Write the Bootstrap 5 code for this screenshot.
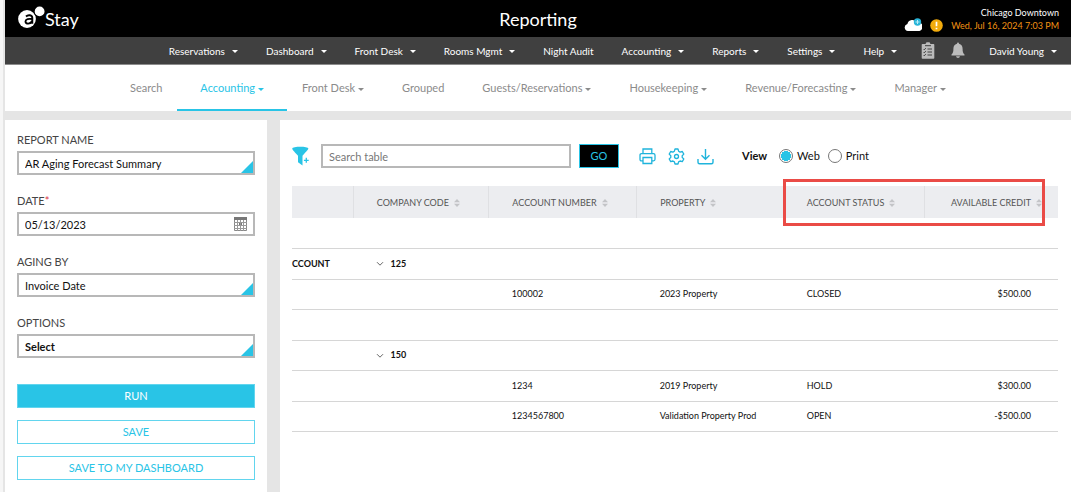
<!DOCTYPE html>
<html lang="en">
<head>
<meta charset="utf-8">
<meta name="viewport" content="width=device-width, initial-scale=1">
<title>Reporting - AR Aging Forecast Summary</title>
<link href="https://cdn.jsdelivr.net/npm/bootstrap@5.3.0/dist/css/bootstrap.min.css" rel="stylesheet">
<style>
  :root { --accent: #29c4e6; --rule: #e5e5e5; }
  body { font-family: Lato, sans-serif; font-size: 11px; line-height: 14px; color: #111; background: #f6f6f6; }
  a { text-decoration: none; }
  .app { margin-left: 3px; border-left: 2px solid var(--rule); background: #fff; }
  .topbar { background: #000; height: 37px; color: #fff; display: grid; grid-template-columns: 1fr auto 1fr; padding: 0 12px; }
  .brand-name { font-size: 18px; line-height: 22px; }
  .page-title { font-size: 18px; line-height: 22px; margin: 0; font-weight: 400; }
  .status { font-size: 9px; line-height: 13px; }
  .stamp { color: #f39314; }
  .mainnav { background: #404040; height: 28px; border-bottom: 1px solid #8c8c8c; gap: 20px; padding-right: 10px; font-size: 10px; }
  .mainnav a { color: #fff; }
  .mainnav > a { padding: 0 4px; }
  .arrow::after { content: ""; display: inline-block; border: 3px solid transparent; border-top-color: currentColor; border-bottom: 0; vertical-align: middle; margin-left: 7px; }
  .tabs .arrow::after { margin-left: 3px; }
  .tabs { height: 46px; font-size: 11px; }
  .tabs a { color: #8b8b8b; padding: 2px 23px 0; margin: 0 -4px; border-bottom: 2px solid transparent; display: flex; align-items: center; }
  .tabs a.active { color: var(--accent); border-color: var(--accent); }
  .workspace { background: var(--rule); padding-top: 9px; gap: 13px; }
  .sidebar { width: 262px; padding: 13px 12px 12px; background: #fff; }
  .sidebar label { color: #444; display: block; margin-bottom: 4px; }
  .field { margin-bottom: 19px; position: relative; }
  .box { display: block; width: 100%; height: 24px; border: 2px solid #b8b8b8; border-radius: 0; padding: 1px 6px 0; font-size: 11px; line-height: 19px; color: #111; background: #fff; appearance: none; }
  select.box { background: #fff url("data:image/svg+xml,%3Csvg xmlns='http://www.w3.org/2000/svg' width='12' height='12'%3E%3Cpath d='M12 0v12H0z' fill='%2329c4e6'/%3E%3C/svg%3E") right bottom no-repeat; }
  .cal { position: absolute; right: 8px; bottom: 5px; }
  .actions { gap: 12px; padding-top: 7px; }
  .btn-line { height: 24px; border: 1px solid #62d5ee; border-radius: 0; font-size: 11px; line-height: 14px; padding: 0; color: var(--accent); background: #fff; }
  .btn-line.fill { background: var(--accent); color: #fff; }
  .report { padding: 24px 13px 12px 12px; background: #fff; min-width: 0; }
  .search { width: 250px; }
  .search::placeholder { color: #777; opacity: 1; }
  .go { width: 40px; height: 24px; border: 1px solid var(--accent); border-radius: 0; background: #000; color: var(--accent); font-size: 11px; line-height: 14px; padding: 0; }
  .tool { border: 0; background: none; padding: 0; display: flex; color: #1fb4dc; }
  .pick { width: 14px; height: 14px; margin: 0; appearance: none; border: 1px solid #777; border-radius: 50%; }
  .pick:checked { background: radial-gradient(circle, var(--accent) 5px, #fff 5px); }
  .grid-wrap { position: relative; margin-top: 18px; }
  .grid { width: 100%; table-layout: fixed; font-size: 9px; }
  .grid th, .grid td { padding: 0 0 0 23px; white-space: nowrap; }
  .grid thead th { height: 32px; padding-top: 2px; background: #ecedf0; color: #555; font-weight: 400; border-right: 1px solid #dfe0e3; }
  .grid thead th:last-child { border-right: 0; text-align: right; padding-right: 16px; }
  .grid thead th:nth-child(4) { border-right: 0; }
  .grid tbody tr { height: 30px; border-bottom: 1px solid #d6d6d6; }
  .grid tbody tr:nth-child(even) { height: 31px; }
  .grid tbody td:first-child { padding-left: 0; }
  .grid tbody td:last-child { text-align: right; padding-right: 27px; }
  .grp td { font-weight: 700; }
  .sort { margin-left: 5px; vertical-align: -1px; }
  .highlight { position: absolute; top: -7px; left: 64.1%; right: 13px; height: 47px; border: 3px solid #ea4b46; pointer-events: none; }
</style>
</head>
<body>
<svg class="d-none" aria-hidden="true">
  <symbol id="sort" viewBox="0 0 6 8"><path d="M0 3.2 3 0l3 3.2zM0 4.8h6L3 8z" fill="#c3c4c7"/></symbol>
  <symbol id="chev" viewBox="0 0 8 6"><path d="m1 1.2 3 3 3-3" fill="none" stroke="#666"/></symbol>
</svg>
<div class="app d-flex flex-column min-vh-100">
  <header class="topbar align-items-center">
    <div class="d-flex align-items-center">
      <svg class="mb-1" width="28" height="26" viewBox="0 0 28 26" aria-hidden="true">
        <circle cx="10" cy="15" r="8.9" fill="#fff"/><circle cx="22.700" cy="7.400" r="5.800" fill="#000"/><circle cx="22.600" cy="7.400" r="4.900" fill="#fff"/>
        <path d="M9 12.500c2-2 6.300-1.800 6.300 1.600v5.700M15 15c-3-.4-6.500-.2-6.500 2.500 0 3 5 2.700 6.500-.2" fill="none" stroke="#000" stroke-width="1.900"/>
      </svg>
      <span class="brand-name">Stay</span>
    </div>
    <h1 class="page-title">Reporting</h1>
    <div class="d-flex justify-content-end align-items-end">
      <svg class="me-2" width="18" height="14" viewBox="0 0 18 14" aria-label="Weather"><path d="M4 13a3.500 3.500 0 0 1-.6-6.900A5.200 5.200 0 0 1 13 4.500 4.300 4.300 0 0 1 15.500 13z" fill="#fff"/><circle cx="13.500" cy="4" r="3.700" fill="#29b4d8"/><path d="M11.500 4h4M13.500 2v4" stroke="#b9ecf8"/></svg>
      <svg class="me-2" width="13" height="13" viewBox="0 0 13 13" aria-label="Alert"><circle cx="6.500" cy="6.500" r="6.300" fill="#f2ab0c"/><path d="M6.500 2.700v4.600M6.500 8.700v1.600" stroke="#fff" stroke-width="1.700"/></svg>
      <div class="status text-end"><div>Chicago Downtown</div><div class="stamp">Wed, Jul 16, 2024 7:03 PM</div></div>
    </div>
  </header>
  <nav class="mainnav d-flex justify-content-end align-items-center" aria-label="Main">
    <a class="arrow" href="#">Reservations</a><a class="arrow" href="#">Dashboard</a><a class="arrow" href="#">Front Desk</a><a class="arrow" href="#">Rooms Mgmt</a><a href="#">Night Audit</a><a class="arrow" href="#">Accounting</a><a class="arrow" href="#">Reports</a><a class="arrow" href="#">Settings</a><a class="arrow" href="#">Help</a>
    <span class="d-flex align-items-center gap-3">
      <a class="d-flex" href="#" aria-label="Tasks"><svg width="14" height="17" viewBox="0 0 14 17"><path d="M1.500 2h3l1-1.800h3l1 1.800h3q.8 0 .8.800V16q0 .8-.8.800h-11Q.7 16.800.7 16V2.800q0-.8.8-.8z" fill="#bbb"/><path d="M4 3.700h6M6.500 7h4.500M6.500 10h4.500M6.500 13h4.500M2.500 7l.8.800 1.500-1.700M2.500 10l.8.800 1.500-1.700M2.500 13l.8.800 1.500-1.700" stroke="#404040" fill="none"/></svg></a>
      <a class="d-flex" href="#" aria-label="Notifications"><svg width="14" height="17" viewBox="0 0 14 17"><path d="M7 .5q1 0 1 1.300c2.500.5 3.600 2.400 3.600 5 0 3.200.4 4.300 1.900 5.700v1H.5v-1c1.500-1.400 1.900-2.500 1.900-5.700 0-2.600 1.100-4.500 3.600-5Q6 .5 7 .5zM5 14.300h4Q8.700 16 7 16t-2-1.700z" fill="#bbb"/></svg></a>
    </span>
    <a class="arrow" href="#">David Young</a>
  </nav>
  <nav class="tabs d-flex justify-content-center" aria-label="Reports">
    <a href="#"><span>Search</span></a><a class="active" href="#"><span class="arrow">Accounting</span></a><a href="#"><span class="arrow">Front Desk</span></a><a href="#"><span>Grouped</span></a><a href="#"><span class="arrow">Guests/Reservations</span></a><a href="#"><span class="arrow">Housekeeping</span></a><a href="#"><span class="arrow">Revenue/Forecasting</span></a><a href="#"><span class="arrow">Manager</span></a>
  </nav>
  <main class="workspace d-flex flex-grow-1">
    <form class="sidebar flex-shrink-0">
      <div class="field"><label for="rname">REPORT NAME</label><select class="box" id="rname"><option>AR Aging Forecast Summary</option></select></div>
      <div class="field"><label for="rdate">DATE<span class="text-danger">*</span></label><input class="box" id="rdate" type="text" value="05/13/2023">
        <svg class="cal" width="13" height="14" viewBox="0 0 13 14" aria-hidden="true"><path d="M.5.500h12v13H.5z" fill="#fff" stroke="#888"/><path d="M0 0h13v3H0zM5 6h3v3H5z" fill="#777"/><path d="M3.500 3v11M6.500 3v11M9.500 3v11M0 5.500h13M0 8.500h13M0 11.500h13" stroke="#999"/></svg></div>
      <div class="field"><label for="aging">AGING BY</label><select class="box" id="aging"><option>Invoice Date</option></select></div>
      <div class="field"><label for="opts">OPTIONS</label><select class="box fw-bold" id="opts"><option>Select</option></select></div>
      <div class="actions d-grid">
        <button class="btn btn-line fill" type="button">RUN</button>
        <button class="btn btn-line" type="button">SAVE</button>
        <button class="btn btn-line" type="button">SAVE TO MY DASHBOARD</button>
      </div>
    </form>
    <section class="report flex-grow-1">
      <div class="d-flex align-items-center">
        <button class="tool me-2" type="button" aria-label="Add filter"><svg width="21" height="20" viewBox="0 0 21 20"><path d="M.3 2.500C.3.300 16.300.300 16.300 2.500c0 1-1.200 2.200-5.800 7.200v9.800L6 16.300V9.700C1.500 5 .3 3.500.3 2.500z" fill="#29c4e6"/><path d="M14.300 11.800v5M11.900 14.300h4.800" stroke="#29c4e6" stroke-width="1.300"/></svg></button>
        <input class="box search" type="text" placeholder="Search table" aria-label="Search table">
        <button class="btn go ms-2 me-3" type="button">GO</button>
        <div class="d-flex gap-2 px-1">
          <button class="tool" type="button" aria-label="Print"><svg width="17" height="17" viewBox="0 0 17 17" fill="none" stroke="currentColor" stroke-width="1.300"><path d="M4 5.500V1h8.800v4.500M4 12.800H2.500q-1.500 0-1.500-1.500V7.200q0-1.500 1.500-1.500h12q1.500 0 1.500 1.500v4.100q0 1.500-1.500 1.500H12.800M4 9.500h8.800v6H4z"/></svg></button>
          <button class="tool ms-1" type="button" aria-label="Settings"><svg width="17" height="17" viewBox="0 0 17 17" fill="none" stroke="currentColor" stroke-width="1.300"><path d="M7 1h3l.6 2.200 1.500.9 2.200-.6 1.500 2.600-1.600 1.600v1.700l1.600 1.600-1.500 2.600-2.200-.6-1.500.9L10 16H7l-.6-2.100-1.500-.9-2.200.6L1.200 11l1.600-1.600V7.700L1.200 6.100l1.500-2.600 2.200.6 1.500-.9z" stroke-linejoin="round"/><circle cx="8.500" cy="8.500" r="2"/></svg></button>
          <button class="tool ms-1" type="button" aria-label="Download"><svg width="17" height="17" viewBox="0 0 17 17" fill="none" stroke="currentColor" stroke-width="1.400"><path d="M8.500 1v10M4.500 7.300l4 4 4-4M1 11v3.200q0 1.500 1.500 1.500h12q1.500 0 1.500-1.500V11"/></svg></button>
        </div>
        <div class="d-flex align-items-center ms-4">
          <span class="fw-bold me-2 pe-1">View</span>
          <input class="pick" type="radio" name="v" id="web" checked><label class="ms-1 me-2" for="web">Web</label>
          <input class="pick" type="radio" name="v" id="prn"><label class="ms-1" for="prn">Print</label>
        </div>
      </div>
      <div class="grid-wrap">
        <table class="grid">
          <colgroup><col style="width:8%"><col style="width:17.700%"><col style="width:19.300%"><col style="width:19.200%"><col style="width:18.400%"><col style="width:17.400%"></colgroup>
          <thead><tr><th></th>
            <th scope="col">COMPANY CODE<svg class="sort" width="6" height="8"><use href="#sort"/></svg></th>
            <th scope="col">ACCOUNT NUMBER<svg class="sort" width="6" height="8"><use href="#sort"/></svg></th>
            <th scope="col">PROPERTY<svg class="sort" width="6" height="8"><use href="#sort"/></svg></th>
            <th scope="col">ACCOUNT STATUS<svg class="sort" width="6" height="8"><use href="#sort"/></svg></th>
            <th scope="col">AVAILABLE CREDIT<svg class="sort" width="6" height="8"><use href="#sort"/></svg></th></tr></thead>
          <tbody>
            <tr><td colspan="6"></td></tr>
            <tr class="grp"><td>CCOUNT</td><td><svg class="me-1" width="8" height="6"><use href="#chev"/></svg> 125</td><td></td><td></td><td></td><td></td></tr>
            <tr><td></td><td></td><td>100002</td><td>2023 Property</td><td>CLOSED</td><td>$500.00</td></tr>
            <tr><td colspan="6"></td></tr>
            <tr class="grp"><td></td><td><svg class="me-1" width="8" height="6"><use href="#chev"/></svg> 150</td><td></td><td></td><td></td><td></td></tr>
            <tr><td></td><td></td><td>1234</td><td>2019 Property</td><td>HOLD</td><td>$300.00</td></tr>
            <tr><td></td><td></td><td>1234567800</td><td>Validation Property Prod</td><td>OPEN</td><td>-$500.00</td></tr>
          </tbody>
        </table>
        <div class="highlight"></div>
      </div>
    </section>
  </main>
</div>
<script src="https://cdn.jsdelivr.net/npm/bootstrap@5.3.0/dist/js/bootstrap.bundle.min.js"></script>
</body>
</html>
